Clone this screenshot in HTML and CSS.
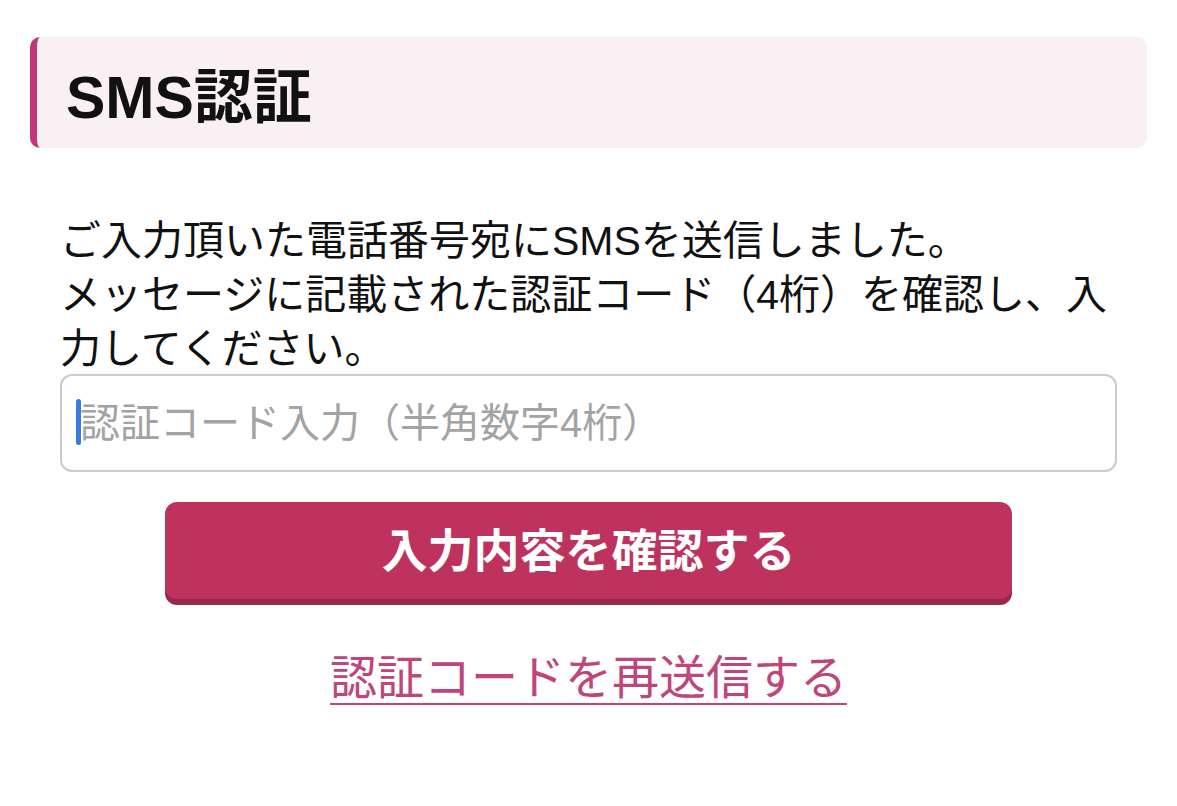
FILE: index.html
```html
<!DOCTYPE html>
<html lang="ja">
<head>
    <meta charset="UTF-8">
    <meta name="viewport" content="width=device-width, initial-scale=1.0">
    <title>SMS認証</title>
    <link rel="stylesheet" href="styles.css">
</head>
<body>
    <div class="page">
        <h1 class="page-title">SMS認証</h1>
        <form class="sms-form" action="#">
            <p class="lead">ご入力頂いた電話番号宛にSMSを送信しました。<br>メッセージに記載された認証コード（4桁）を確認し、入力してください。</p>
            <div class="code-field">
                <span class="caret"></span>
                <input type="tel" class="code-input" name="code" maxlength="4" placeholder="認証コード入力（半角数字4桁）">
            </div>
            <button type="submit" class="confirm-btn">入力内容を確認する</button>
            <div class="resend">
                <a href="#" class="resend-link">認証コードを再送信する</a>
            </div>
        </form>
    </div>
</body>
</html>
```

FILE: styles.css
```css
body {
    margin: 0;
    font-family: "Liberation Sans", "Noto Sans CJK JP", sans-serif;
    background-color: #fff;
    color: #111;
}
.page {
    padding: 37px 30px 0;
}
.page-title {
    margin: 0;
    height: 111px;
    display: flex;
    align-items: center;
    padding-left: 29px;
    font-size: 59px;
    font-weight: 700;
    color: #111;
    background-color: #faf0f4;
    border-left: 7px solid #c0387a;
    border-radius: 10px;
}
.sms-form {
    padding: 0 30px;
}
.lead {
    margin: 66px 0 0;
    font-size: 41px;
    line-height: 54px;
    color: #111;
}
.code-field {
    position: relative;
    margin-top: -2px;
}
.code-input {
    display: block;
    width: 100%;
    height: 98px;
    box-sizing: border-box;
    padding: 0 18px;
    font-family: inherit;
    font-size: 40px;
    border: 2px solid #cbcbcb;
    border-radius: 12px;
    background: #fff;
    outline: none;
}
.code-input::placeholder {
    color: #a3a3a3;
}
.caret {
    position: absolute;
    left: 16px;
    top: 25px;
    width: 5px;
    height: 46px;
    border-radius: 3px;
    background-color: #3a7be0;
}
.confirm-btn {
    display: block;
    width: 847px;
    height: 97px;
    margin: 30px auto 0;
    padding: 0 0 8px;
    font-family: inherit;
    font-size: 46px;
    font-weight: 700;
    color: #fff;
    background-color: #bd335e;
    border: none;
    border-radius: 12px;
    box-shadow: 0 6px 0 #97284a;
    cursor: pointer;
}
.resend {
    margin-top: 47px;
    text-align: center;
}
.resend-link {
    font-size: 47px;
    line-height: 64px;
    color: #c0457a;
    text-decoration: underline;
    text-decoration-thickness: 2px;
    text-underline-offset: 9px;
}
```
